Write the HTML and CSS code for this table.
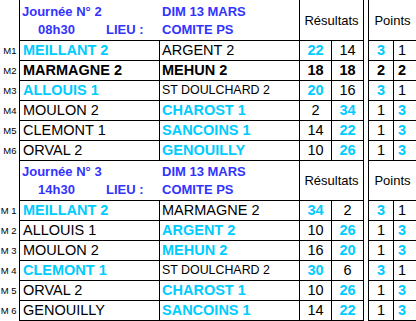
FILE: index.html
```html
<!DOCTYPE html>
<html lang="fr">
<head>
<meta charset="utf-8">
<title>Journées</title>
<link rel="stylesheet" href="styles.css">
</head>
<body>
<div class="sheet">
  <!-- Journée 2 header -->
  <div class="lab hdr"></div>
  <div class="head">
    <div class="hl">Journée N° 2</div>
    <div class="hr">DIM 13 MARS</div>
    <div class="time"><span class="hour">08h30</span><span>LIEU :</span></div>
    <div class="hr">COMITE PS</div>
  </div>
  <div class="res">Résultats</div>
  <div class="gap"></div>
  <div class="pts">Points</div>

  <div class="lab">M1</div>
  <div class="c home win">MEILLANT 2</div>
  <div class="c away">ARGENT 2</div>
  <div class="c num win">22</div>
  <div class="c num">14</div>
  <div class="gap"></div>
  <div class="c num win">3</div>
  <div class="c num p2">1</div>

  <div class="lab">M2</div>
  <div class="c home draw">MARMAGNE 2</div>
  <div class="c away draw">MEHUN 2</div>
  <div class="c num draw">18</div>
  <div class="c num draw">18</div>
  <div class="gap"></div>
  <div class="c num draw">2</div>
  <div class="c num p2 draw">2</div>

  <div class="lab">M3</div>
  <div class="c home win">ALLOUIS 1</div>
  <div class="c away small">ST DOULCHARD 2</div>
  <div class="c num win">20</div>
  <div class="c num">16</div>
  <div class="gap"></div>
  <div class="c num win">3</div>
  <div class="c num p2">1</div>

  <div class="lab">M4</div>
  <div class="c home">MOULON 2</div>
  <div class="c away win">CHAROST 1</div>
  <div class="c num">2</div>
  <div class="c num win">34</div>
  <div class="gap"></div>
  <div class="c num">1</div>
  <div class="c num p2 win">3</div>

  <div class="lab">M5</div>
  <div class="c home">CLEMONT 1</div>
  <div class="c away win">SANCOINS 1</div>
  <div class="c num">14</div>
  <div class="c num win">22</div>
  <div class="gap"></div>
  <div class="c num">1</div>
  <div class="c num p2 win">3</div>

  <div class="lab">M6</div>
  <div class="c home">ORVAL 2</div>
  <div class="c away win">GENOUILLY</div>
  <div class="c num">10</div>
  <div class="c num win">26</div>
  <div class="gap"></div>
  <div class="c num">1</div>
  <div class="c num p2 win">3</div>

  <!-- Journée 3 header -->
  <div class="lab hdr"></div>
  <div class="head top">
    <div class="hl">Journée N° 3</div>
    <div class="hr">DIM 13 MARS</div>
    <div class="time"><span class="hour">14h30</span><span>LIEU :</span></div>
    <div class="hr">COMITE PS</div>
  </div>
  <div class="res top">Résultats</div>
  <div class="gap"></div>
  <div class="pts top">Points</div>

  <div class="lab">M 1</div>
  <div class="c home win">MEILLANT 2</div>
  <div class="c away">MARMAGNE 2</div>
  <div class="c num win">34</div>
  <div class="c num">2</div>
  <div class="gap"></div>
  <div class="c num win">3</div>
  <div class="c num p2">1</div>

  <div class="lab">M 2</div>
  <div class="c home">ALLOUIS 1</div>
  <div class="c away win">ARGENT 2</div>
  <div class="c num">10</div>
  <div class="c num win">26</div>
  <div class="gap"></div>
  <div class="c num">1</div>
  <div class="c num p2 win">3</div>

  <div class="lab">M 3</div>
  <div class="c home">MOULON 2</div>
  <div class="c away win">MEHUN 2</div>
  <div class="c num">16</div>
  <div class="c num win">20</div>
  <div class="gap"></div>
  <div class="c num">1</div>
  <div class="c num p2 win">3</div>

  <div class="lab">M 4</div>
  <div class="c home win">CLEMONT 1</div>
  <div class="c away small">ST DOULCHARD 2</div>
  <div class="c num win">30</div>
  <div class="c num">6</div>
  <div class="gap"></div>
  <div class="c num win">3</div>
  <div class="c num p2">1</div>

  <div class="lab">M 5</div>
  <div class="c home">ORVAL 2</div>
  <div class="c away win">CHAROST 1</div>
  <div class="c num">10</div>
  <div class="c num win">26</div>
  <div class="gap"></div>
  <div class="c num">1</div>
  <div class="c num p2 win">3</div>

  <div class="lab">M 6</div>
  <div class="c home last">GENOUILLY</div>
  <div class="c away win last">SANCOINS 1</div>
  <div class="c num last">14</div>
  <div class="c num win last">22</div>
  <div class="gap"></div>
  <div class="c num last">1</div>
  <div class="c num p2 win last">3</div>
</div>
</body>
</html>
```

FILE: styles.css
```css
* {
  box-sizing: border-box;
  margin: 0;
  padding: 0;
}

html, body {
  background: #ffffff;
}

body {
  width: 416px;
  height: 321px;
  overflow: hidden;
  font-family: "Liberation Sans", Arial, sans-serif;
  color: #000000;
}

.sheet {
  display: grid;
  grid-template-columns: 19px 140px 140px 32px 32px 5px 25px 23px;
  grid-template-rows: 40px repeat(6, 20px) 40px repeat(5, 20px) 21px;
}

.lab {
  font-size: 9.5px;
  line-height: 19px;
  padding: 1px 2.5px 0 0;
  text-align: right;
  white-space: nowrap;
}

.c {
  border-left: 1px solid #000;
  border-top: 1px solid #000;
  font-size: 14.5px;
  line-height: 19px;
  white-space: nowrap;
  overflow: hidden;
}

.home {
  padding-left: 3px;
}

.away {
  padding-left: 2px;
}

.small {
  font-size: 12.4px;
}

.num {
  text-align: center;
}

.p2 {
  padding-right: 6px;
}

.win {
  color: #00ccff;
  font-weight: bold;
}

.draw {
  font-weight: bold;
}

.last {
  border-bottom: 1px solid #000;
}

.gap {
  border-left: 1px solid #000;
}

.head {
  grid-column: 2 / 4;
  border-left: 1px solid #000;
  display: grid;
  grid-template-columns: 139px 140px;
  grid-template-rows: 18px 18px;
  padding-top: 2.5px;
  font-size: 13px;
  line-height: 18px;
  font-weight: bold;
  color: #3333ff;
  white-space: nowrap;
}

.head.top {
  border-top: 1px solid #000;
  padding-top: 1.5px;
}

.hl {
  padding-left: 2px;
}

.hr {
  padding-left: 3px;
}

.time {
  display: flex;
  padding-left: 18px;
}

.hour {
  width: 68px;
}

.res {
  grid-column: 4 / 6;
}

.pts {
  grid-column: 7 / 9;
}

.res, .pts {
  border-left: 1px solid #000;
  font-size: 13px;
  line-height: 39px;
  padding-top: 1px;
  text-align: center;
  white-space: nowrap;
}

.res.top, .pts.top {
  border-top: 1px solid #000;
  padding-top: 0;
}
```
